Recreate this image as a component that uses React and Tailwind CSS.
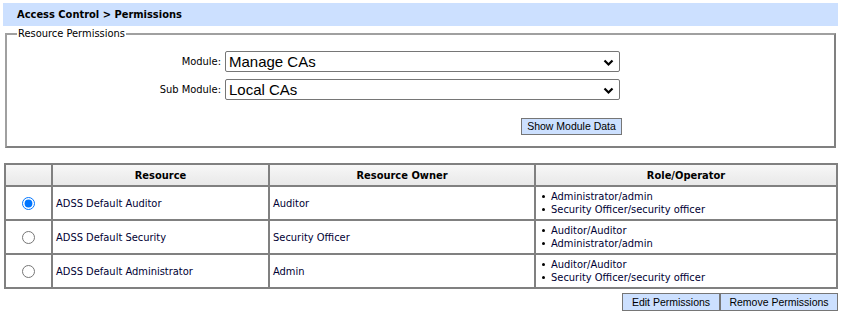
import React, { useState } from 'react';

const rows = [
  { resource: 'ADSS Default Auditor', owner: 'Auditor', roles: ['Administrator/admin', 'Security Officer/security officer'] },
  { resource: 'ADSS Default Security', owner: 'Security Officer', roles: ['Auditor/Auditor', 'Administrator/admin'] },
  { resource: 'ADSS Default Administrator', owner: 'Admin', roles: ['Auditor/Auditor', 'Security Officer/security officer'] },
];

const Chevron = () => (
  <svg width="11" height="8" viewBox="0 0 11 8" className="absolute right-[5px] top-[7px] pointer-events-none">
    <path d="M1.5 1.5 L5.5 5.5 L9.5 1.5" fill="none" stroke="#000" strokeWidth="2.2" />
  </svg>
);

const App = () => {
  const [selected, setSelected] = useState(0);

  return (
    <div className="w-[841px] h-[314px] bg-white text-black font-['DejaVu_Sans_Condensed','DejaVu_Sans',sans-serif] text-[11px] leading-[13px]">
      {/* Title bar */}
      <div className="ml-[3px] mt-[3px] w-[835px] h-[23px] bg-[#cce0ff] flex items-center pl-[14px] font-bold text-[11px]">
        Access Control &gt; Permissions
      </div>

      {/* Resource permissions fieldset */}
      <fieldset className="ml-[5px] mt-[1px] w-[831px] h-[121px] border-2 border-[#808080] border-t-[#a0a0a0] border-l-[#a0a0a0] px-[10px] pt-0 pb-0">
        <legend className="px-[1px] text-[11px] leading-[13px]">Resource Permissions</legend>
        <div className="flex flex-col gap-[7px] mt-[11px]">
          <div className="flex items-center">
            <label className="w-[208px] text-right pr-[4px]">Module:</label>
            <div className="relative w-[395px] h-[21px] border border-[#767676] rounded-[2px] bg-white">
              <div className="pl-[3px] text-[15px] leading-[19px] font-['Liberation_Sans',sans-serif]">Manage CAs</div>
              <Chevron />
            </div>
          </div>
          <div className="flex items-center">
            <label className="w-[208px] text-right pr-[4px]">Sub Module:</label>
            <div className="relative w-[395px] h-[21px] border border-[#767676] rounded-[2px] bg-white">
              <div className="pl-[3px] text-[15px] leading-[19px] font-['Liberation_Sans',sans-serif]">Local CAs</div>
              <Chevron />
            </div>
          </div>
        </div>
        <div className="flex justify-end w-[605px] mt-[18px]">
          <button className="h-[17px] w-[101px] bg-[#cce0ff] border border-[#767676] text-[10.5px] leading-[15px] font-['Liberation_Sans',sans-serif]">
            Show Module Data
          </button>
        </div>
      </fieldset>

      {/* Table */}
      <table className="ml-[4px] mt-[15px] w-[834px] border-collapse border-2 border-[#808080]">
        <thead>
          <tr className="h-[22px] bg-gradient-to-b from-[#f8f8f8] to-[#e8e8e8]">
            <th className="w-[47px] border-2 border-[#808080]"></th>
            <th className="w-[217px] border-2 border-[#808080] font-bold">Resource</th>
            <th className="w-[266px] border-2 border-[#808080] font-bold">Resource Owner</th>
            <th className="border-2 border-[#808080] font-bold">Role/Operator</th>
          </tr>
        </thead>
        <tbody>
          {rows.map((r, i) => (
            <tr key={r.resource} className="h-[34px]">
              <td className="border-2 border-[#808080] text-center">
                <input
                  type="radio"
                  name="perm"
                  checked={selected === i}
                  onChange={() => setSelected(i)}
                  className="w-[13px] h-[13px] align-middle accent-[#0075ff]"
                />
              </td>
              <td className="border-2 border-[#808080] pl-[3px] text-[#000033]">{r.resource}</td>
              <td className="border-2 border-[#808080] pl-[3px] text-[#000033]">{r.owner}</td>
              <td className="border-2 border-[#808080] pl-[4px] text-[#000033]">
                <ul>
                  {r.roles.map((role) => (
                    <li key={role} className="flex items-center">
                      <span className="w-[3px] h-[3px] rounded-full bg-black mr-[6px] ml-[2px]"></span>
                      {role}
                    </li>
                  ))}
                </ul>
              </td>
            </tr>
          ))}
        </tbody>
      </table>

      {/* Action buttons */}
      <div className="flex justify-end w-[838px] mt-[4px]">
        <button className="h-[18px] w-[98px] bg-[#cce0ff] border border-[#767676] text-[10.5px] leading-[16px] font-['Liberation_Sans',sans-serif]">
          Edit Permissions
        </button>
        <button className="h-[18px] w-[118px] bg-[#cce0ff] border border-[#767676] text-[10.5px] leading-[16px] font-['Liberation_Sans',sans-serif]">
          Remove Permissions
        </button>
      </div>
    </div>
  );
};

export default App;
